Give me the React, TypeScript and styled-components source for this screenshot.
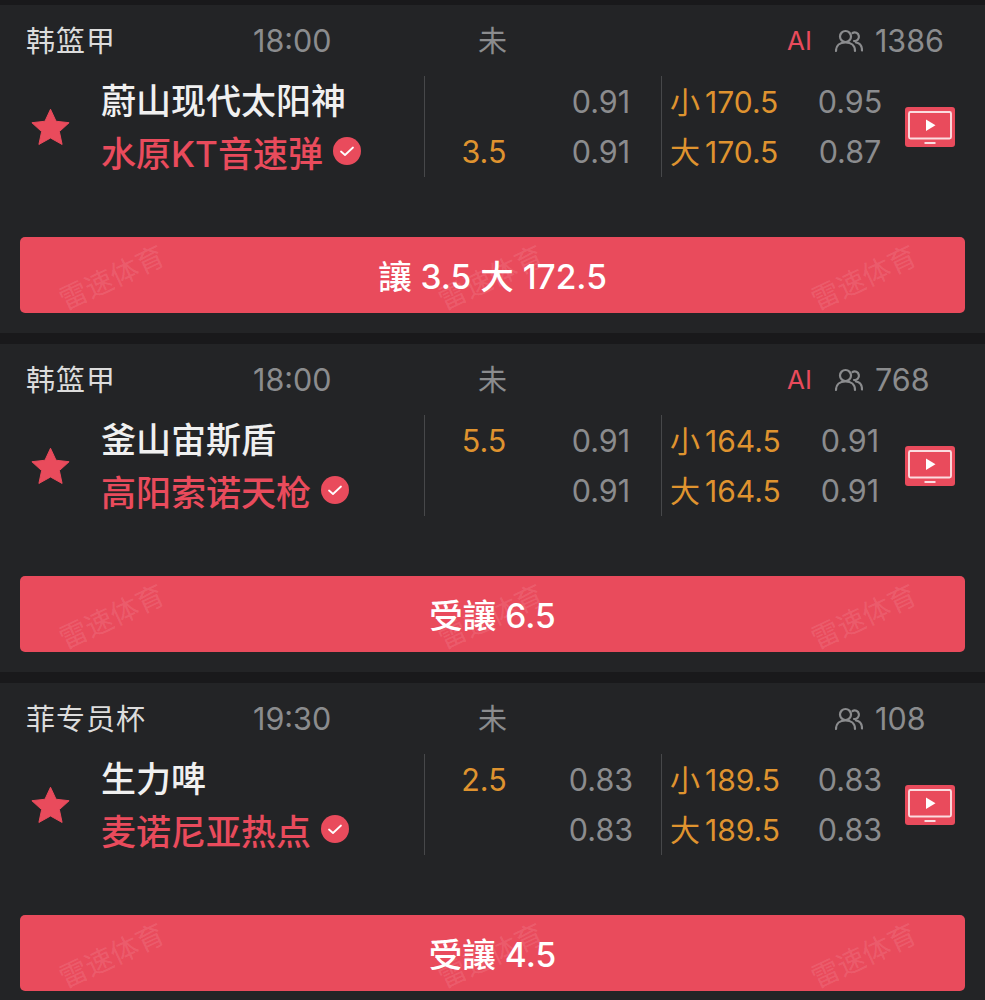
import React from "react";
import styled, { createGlobalStyle } from "styled-components";

const RED = "#e94b5c";
const ORANGE = "#df932f";
const GREY = "#8b8c8e";

const GlobalStyle = createGlobalStyle`
  html, body {
    margin: 0;
    height: 1000px;
    overflow: hidden;
    background: #19191b;
  }
  body {
    font-family: Inter, "Noto Sans CJK SC", sans-serif;
  }
`;

const Page = styled.div`
  width: 985px;
  padding-top: 5px;
`;

const Card = styled.section`
  height: 328px;
  margin-bottom: 11px;
  padding: 0 20px;
  box-sizing: border-box;
  background: #232426;
`;

const Header = styled.div`
  display: grid;
  grid-template-columns: 227px 225px 1fr;
  align-items: center;
  height: 71px;
  padding-left: 6px;
  font-size: 30.5px;
  color: ${GREY};
`;

const League = styled.span`
  color: #dcdcdc;
  font-size: 29px;
  letter-spacing: 1px;
  padding-bottom: 4px;
`;

const Status = styled.span`
  font-size: 29px;
  margin-right: auto;
  padding-bottom: 4px;
`;

const Meta = styled.div`
  display: flex;
  align-items: center;
  justify-content: flex-end;
  padding-right: 21px;
`;

const AiTag = styled.span`
  color: ${RED};
  font-size: 26px;
  margin-right: 23px;
`;

const Count = styled.span`
  margin-left: 12px;
  min-width: 69px;
`;

const Body = styled.div`
  display: flex;
  height: 101px;
  margin-bottom: 60px;
`;

const StarCol = styled.div`
  display: flex;
  align-items: center;
  width: 81px;
  padding-left: 11px;
  box-sizing: border-box;
`;

const Teams = styled.div`
  display: grid;
  grid-auto-rows: 50px;
  align-items: center;
  width: 323px;
`;

const Team = styled.div<{ $red?: boolean }>`
  display: flex;
  align-items: center;
  padding-bottom: ${(p) => (p.$red ? 0 : 5)}px;
  font-size: 35px;
  font-weight: 500;
  color: ${(p) => (p.$red ? RED : "#f0f0f0")};
`;

const Odds = styled.div`
  display: grid;
  grid-template-columns: 118px 116px;
  grid-auto-rows: 50px;
  align-items: center;
  justify-items: center;
  width: 237px;
  border-left: 1px solid #47484a;
  box-sizing: border-box;
`;

const Handicap = styled.span`
  color: ${ORANGE};
  font-size: 30.5px;
  padding-top: 1px;
`;

const Price = styled.span`
  color: ${GREY};
  font-size: 30.5px;
  padding-top: 1px;
`;

const Totals = styled.div`
  display: grid;
  grid-template-columns: 137px 102px;
  grid-auto-rows: 50px;
  align-items: center;
  justify-items: center;
  width: 244px;
  border-left: 1px solid #47484a;
  box-sizing: border-box;
`;

const Line = styled.span`
  justify-self: start;
  padding: 0 0 2px 8px;
  color: ${ORANGE};
  font-size: 30px;
  white-space: nowrap;
`;

const LineValue = styled.span`
  margin-left: 5px;
`;

const Tv = styled.div`
  display: flex;
  align-items: center;
`;

const Pick = styled.button`
  position: relative;
  display: block;
  width: 945px;
  height: 76px;
  padding: 0 0 2px;
  border: 0;
  border-radius: 5px;
  background: ${RED};
  color: #fff;
  font-family: inherit;
  font-size: 33.5px;
  font-weight: 500;
`;

const Watermark = styled.span<{ $x: number }>`
  position: absolute;
  left: ${(p) => p.$x}px;
  top: 19px;
  transform: rotate(-25deg);
  color: rgba(255, 255, 255, 0.11);
  font-size: 28px;
  font-weight: 400;
  white-space: nowrap;
`;

const CheckBadge = styled.svg`
  margin-left: 10px;
  flex: none;
`;

const StarIcon = () => (
  <svg width="39" height="38" viewBox="0 0 40 38">
    <path
      d="M20 .8l5.7 12.3 13.4 1.500-10 9.100 2.800 13.200L20 30.300 8.100 36.900l2.800-13.200-10-9.100 13.400-1.500z"
      fill={RED}
      stroke={RED}
      strokeLinejoin="round"
    />
  </svg>
);

const CheckIcon = () => (
  <CheckBadge width="28" height="28" viewBox="0 0 28 28">
    <circle cx="14" cy="14" r="14" fill={RED} />
    <path d="M8 14.500l4 3.500 8-7.500" fill="none" stroke="#fff" strokeWidth="1.800" strokeLinecap="round" strokeLinejoin="round" />
  </CheckBadge>
);

const PeopleIcon = () => (
  <svg width="28" height="24" viewBox="0 0 28 24" fill="none" stroke="#8b8c8e" strokeWidth="2.200" strokeLinecap="round">
    <circle cx="10.500" cy="7.500" r="5.500" />
    <path d="M1 22c0-5.500 4-8.500 9.500-8.500s9.500 3 9.500 8.500" />
    <path d="M17.500 4a4.300 4.300 0 1 1 1.500 8" />
    <path d="M21 13.500c3.500.5 6 3.500 6 8" />
  </svg>
);

const TvIcon = () => (
  <svg width="50" height="40" viewBox="0 0 50 40">
    <rect width="50" height="40" rx="3" fill={RED} />
    <rect x="4" y="5" width="42" height="26.500" rx="1.500" fill="none" stroke="#fbdde0" strokeWidth="1.900" />
    <path d="M21 12.500l9.500 5.700L21 24z" fill="#fff" />
    <rect x="19.500" y="35" width="11" height="2" fill="#fbdde0" />
  </svg>
);

type Match = {
  league: string;
  time: string;
  ai: boolean;
  count: string;
  home: string;
  away: string;
  spreadHome: string;
  spreadAway: string;
  priceHome: string;
  priceAway: string;
  line: string;
  under: string;
  over: string;
  pick: string;
};

const matches: Match[] = [
  { league: "韩篮甲", time: "18:00", ai: true, count: "1386", home: "蔚山现代太阳神", away: "水原KT音速弹", spreadHome: "", spreadAway: "3.5", priceHome: "0.91", priceAway: "0.91", line: "170.5", under: "0.95", over: "0.87", pick: "讓 3.5 大 172.5" },
  { league: "韩篮甲", time: "18:00", ai: true, count: "768", home: "釜山宙斯盾", away: "高阳索诺天枪", spreadHome: "5.5", spreadAway: "", priceHome: "0.91", priceAway: "0.91", line: "164.5", under: "0.91", over: "0.91", pick: "受讓 6.5" },
  { league: "菲专员杯", time: "19:30", ai: false, count: "108", home: "生力啤", away: "麦诺尼亚热点", spreadHome: "2.5", spreadAway: "", priceHome: "0.83", priceAway: "0.83", line: "189.5", under: "0.83", over: "0.83", pick: "受讓 4.5" },
];

export default function App() {
  return (
    <Page>
      <GlobalStyle />
      {matches.map((m, i) => (
        <Card key={i}>
          <Header>
            <League>{m.league}</League>
            <span>{m.time}</span>
            <Meta>
              <Status>未</Status>
              {m.ai && <AiTag>AI</AiTag>}
              <PeopleIcon />
              <Count>{m.count}</Count>
            </Meta>
          </Header>
          <Body>
            <StarCol>
              <StarIcon />
            </StarCol>
            <Teams>
              <Team>{m.home}</Team>
              <Team $red>
                {m.away}
                <CheckIcon />
              </Team>
            </Teams>
            <Odds>
              <Handicap>{m.spreadHome}</Handicap>
              <Price>{m.priceHome}</Price>
              <Handicap>{m.spreadAway}</Handicap>
              <Price>{m.priceAway}</Price>
            </Odds>
            <Totals>
              <Line>小<LineValue>{m.line}</LineValue></Line>
              <Price>{m.under}</Price>
              <Line>大<LineValue>{m.line}</LineValue></Line>
              <Price>{m.over}</Price>
            </Totals>
            <Tv>
              <TvIcon />
            </Tv>
          </Body>
          <Pick>
            <Watermark $x={35}>雷速体育</Watermark>
            <Watermark $x={414}>雷速体育</Watermark>
            <Watermark $x={787}>雷速体育</Watermark>
            {m.pick}
          </Pick>
        </Card>
      ))}
    </Page>
  );
}
